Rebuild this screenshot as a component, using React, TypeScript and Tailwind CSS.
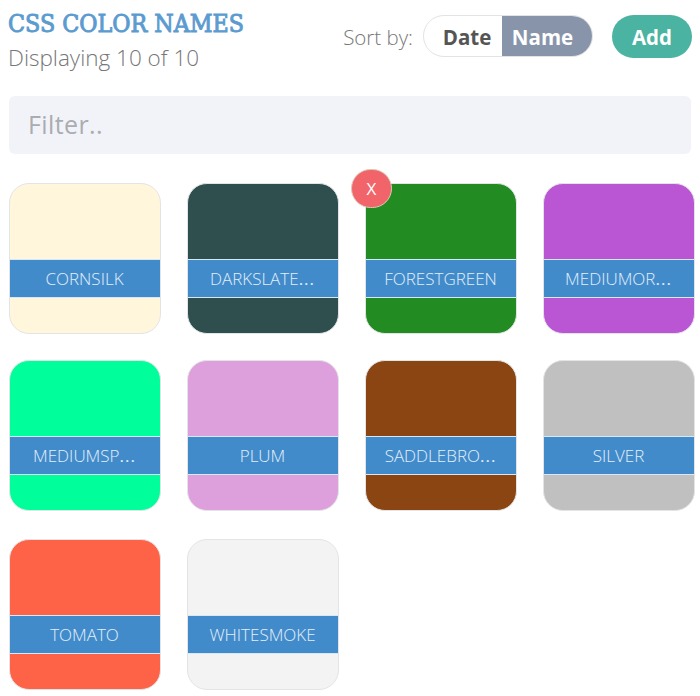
type Swatch = { name: string; color: string; shortened?: boolean; active?: boolean };

const swatches: Swatch[] = [
  { name: 'CORNSILK', color: '#fff6dc' },
  { name: 'DARKSLATE', color: '#2f4f4f', shortened: true },
  { name: 'FORESTGREEN', color: '#228b22', active: true },
  { name: 'MEDIUMOR', color: '#ba55d3', shortened: true },
  { name: 'MEDIUMSP', color: '#00ff9a', shortened: true },
  { name: 'PLUM', color: '#dda0dd' },
  { name: 'SADDLEBRO', color: '#8b4513', shortened: true },
  { name: 'SILVER', color: '#c0c0c0' },
  { name: 'TOMATO', color: '#ff6347' },
  { name: 'WHITESMOKE', color: '#f3f3f3' },
];

function Card({ name, color, shortened, active }: Swatch) {
  return (
    <div className="relative h-[152px] w-[152px]">
      <div
        className="flex h-[151px] w-full flex-col overflow-hidden rounded-[20px] border border-[#e2e4e7] pt-[75px]"
        style={{ backgroundColor: color }}
      >
        <div className="h-[39px] shrink-0 border-y border-[#d8e8f5] bg-[#428bca] pr-px text-center text-[17px] leading-[37px] font-light whitespace-nowrap text-[#e3effa]">
          {name}
          {shortened && <span className="font-normal tracking-[1px]">...</span>}
        </div>
      </div>
      {active && (
        <button className="absolute -top-[14px] -left-[14px] flex h-[39px] w-[41px] items-center justify-center rounded-full border border-[#dfc9b8] bg-[#f0646a] text-[17px] text-white">
          X
        </button>
      )}
    </div>
  );
}

export default function App() {
  return (
    <div className="h-[696px] w-[700px] overflow-hidden bg-white pl-[9px] font-['Open_Sans',sans-serif]">
      <header className="flex h-24 justify-between pr-2">
        <div className="w-[260px] pt-2">
          <h1 className="-ml-px origin-left scale-x-[0.89] font-['DejaVu_Serif',serif] text-[25px] leading-[32px] font-normal whitespace-nowrap text-[#5b9bd0] [-webkit-text-stroke:1px_#5b9bd0]">
            CSS COLOR NAMES
          </h1>
          <p className="-ml-px text-[22.5px] leading-[36px] font-light text-[#777]">Displaying 10 of 10</p>
        </div>
        <div className="flex pt-[15px]">
          <span className="mr-[10px] text-[20.5px] leading-[44px] font-light text-[#777]">Sort by:</span>
          <div className="flex h-[42px] w-[170px] overflow-hidden rounded-full border border-[#e3e3e3] text-[20.5px] leading-[43px] font-bold">
            <button className="w-[78px] pl-[8px] text-[#555]">Date</button>
            <button className="flex-1 bg-[#8794aa] pr-[9px] text-white">Name</button>
          </div>
          <button className="ml-[19px] h-[43px] w-[80px] rounded-full bg-[#4bb3a2] pt-[2px] text-[20.5px] font-bold text-white">Add</button>
        </div>
      </header>
      <input
        className="block h-[58px] w-[682px] rounded-md bg-[#f2f3f9] px-[19px] pb-[2px] text-[25px] tracking-[0.4px] placeholder:text-[#aaacb0]"
        placeholder="Filter.."
      />
      <main className="mt-[29px] grid grid-cols-[repeat(4,152px)] grid-rows-[151px_153px_152px] gap-[26px]">
        {swatches.map((s) => (
          <Card key={s.name} {...s} />
        ))}
      </main>
    </div>
  );
}
